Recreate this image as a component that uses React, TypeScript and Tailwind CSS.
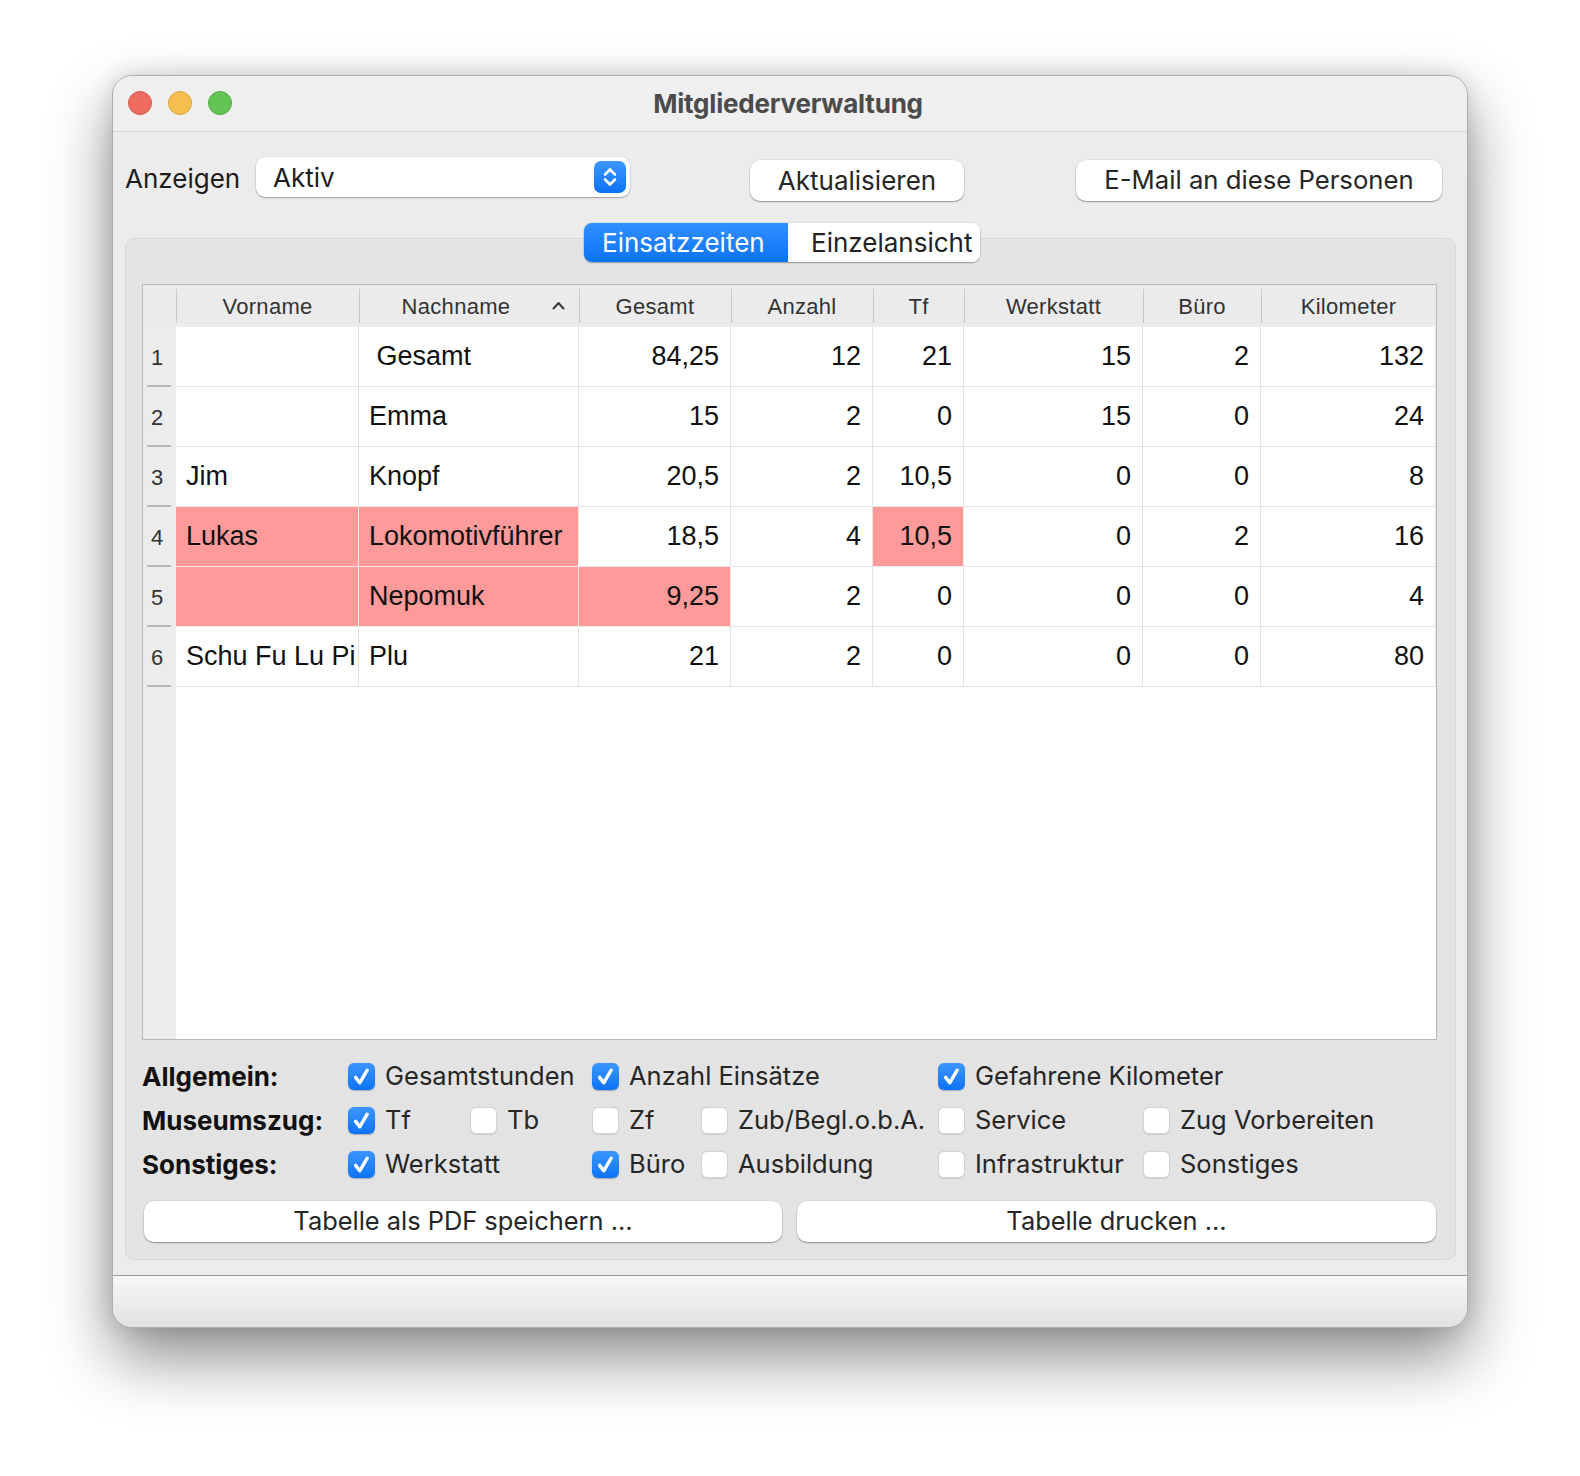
import React from "react";

const UI = "font-['Inter','Noto_Sans',sans-serif]";
const TBL = "font-['Liberation_Sans',Arial,sans-serif]";

type Col = { name: string; right: boolean; sort?: boolean };
const cols: Col[] = [
  { name: "Vorname", right: false },
  { name: "Nachname", right: false, sort: true },
  { name: "Gesamt", right: true },
  { name: "Anzahl", right: true },
  { name: "Tf", right: true },
  { name: "Werkstatt", right: true },
  { name: "Büro", right: true },
  { name: "Kilometer", right: true },
];

const rows: string[][] = [
  ["", " Gesamt", "84,25", "12", "21", "15", "2", "132"],
  ["", "Emma", "15", "2", "0", "15", "0", "24"],
  ["Jim", "Knopf", "20,5", "2", "10,5", "0", "0", "8"],
  ["Lukas", "Lokomotivführer", "18,5", "4", "10,5", "0", "2", "16"],
  ["", "Nepomuk", "9,25", "2", "0", "0", "0", "4"],
  ["Schu Fu Lu Pi", "Plu", "21", "2", "0", "0", "0", "80"],
];

const red: Record<number, number[]> = { 3: [0, 1, 4], 4: [0, 1, 2] };

const GRID =
  "grid grid-cols-[33px_183px_220px_152px_142px_91px_179px_118px_175px]";

function Check({ checked, label }: { checked: boolean; label: string }) {
  return (
    <div className="flex items-center gap-[10px] h-[44px]">
      {checked ? (
        <div className="w-[27px] h-[27px] rounded-[6px] bg-linear-to-b from-[#3a96ff] to-[#0a73f6] flex items-center justify-center shadow-[0_0.5px_1px_rgba(0,0,0,0.25)]">
          <svg width="27" height="27" viewBox="0 0 27 27">
            <path
              d="M7.6 14.4 L11.7 19.8 L19.2 7.2"
              stroke="white"
              strokeWidth="3.4"
              fill="none"
              strokeLinecap="round"
              strokeLinejoin="round"
            />
          </svg>
        </div>
      ) : (
        <div className="w-[27px] h-[27px] rounded-[6px] bg-white border border-[#d3d3d3] shadow-[0_0.5px_1px_rgba(0,0,0,0.1)]" />
      )}
      <span className={`${UI} text-[25.5px] text-[#262626] leading-none whitespace-nowrap`}>
        {label}
      </span>
    </div>
  );
}

function Btn({ children, className }: { children: React.ReactNode; className: string }) {
  return (
    <div
      className={`${className} h-[41px] rounded-[10px] bg-white shadow-[0_1px_1.5px_rgba(0,0,0,0.35),0_0_0_0.5px_rgba(0,0,0,0.08)] flex items-center justify-center text-[#262626] whitespace-nowrap`}
    >
      {children}
    </div>
  );
}

export default function App() {
  return (
    <div className="w-[1580px] h-[1476px] bg-white pt-[75px] pl-[112px]">
      <div className="w-[1356px] h-[1253px] rounded-[20px] border border-[#acacac] bg-[#ececec] overflow-hidden flex flex-col shadow-[0_30px_64px_rgba(0,0,0,0.45),0_0_22px_rgba(0,0,0,0.13)]">
        {/* title bar */}
        <div className="relative h-[56px] shrink-0 bg-[#eeefee] border-b border-[#d5d5d5] flex items-center justify-center">
          <div className="absolute left-[15px] top-[15px] flex gap-[16px]">
            <div className="w-[24px] h-[24px] rounded-full bg-[#ee6b5f] border border-[#d5574c]" />
            <div className="w-[24px] h-[24px] rounded-full bg-[#f5be4f] border border-[#dba43a]" />
            <div className="w-[24px] h-[24px] rounded-full bg-[#62c554] border border-[#50a941]" />
          </div>
          <span className={`${UI} text-[26px] font-bold text-[#4b4b4b] ml-[-4px] tracking-[-0.2px]`}>
            Mitgliederverwaltung
          </span>
        </div>

        {/* top row */}
        <div className={`${UI} flex items-start h-[43px] mt-[25px] pl-[12px] shrink-0`}>
          <div className="w-[131px] h-[42px] flex items-center text-[26px] text-[#1c1c1c]">
            Anzeigen
          </div>
          <div className="w-[374px] h-[40px] rounded-[9px] bg-white shadow-[0_1px_1.5px_rgba(0,0,0,0.3),0_0_0_0.5px_rgba(0,0,0,0.08)] flex items-center pl-[17px] pr-[4px]">
            <span className="flex-1 text-[26px] text-[#1c1c1c]">Aktiv</span>
            <div className="w-[32px] h-[32px] rounded-[7px] bg-linear-to-b from-[#3a96ff] to-[#0a73f6] flex items-center justify-center">
              <svg width="32" height="32" viewBox="0 0 32 32">
                <path d="M11 13.5 L16 8.5 L21 13.5" stroke="white" strokeWidth="2.6" fill="none" strokeLinecap="round" strokeLinejoin="round" />
                <path d="M11 18.5 L16 23.5 L21 18.5" stroke="white" strokeWidth="2.6" fill="none" strokeLinecap="round" strokeLinejoin="round" />
              </svg>
            </div>
          </div>
          <Btn className="ml-[120px] w-[214px] mt-[3px] text-[26px]">Aktualisieren</Btn>
          <Btn className="ml-[112px] w-[366px] mt-[3px] text-[25.7px]">E-Mail an diese Personen</Btn>
        </div>

        {/* group box */}
        <div className="relative ml-[12px] mt-[38px] w-[1331px] h-[1022px] shrink-0 rounded-[9px] border border-[#d8d8d8] bg-[#e3e3e3] pt-[45px] pl-[16px]">
          {/* segmented control */}
          <div className={`${UI} absolute left-[458px] top-[-16px] h-[39px] flex rounded-[8px] overflow-hidden shadow-[0_1px_1.5px_rgba(0,0,0,0.3),0_0_0_0.5px_rgba(0,0,0,0.1)] text-[26px]`}>
            <div className="w-[204px] h-full bg-linear-to-b from-[#2f90ff] to-[#0a73f6] text-white flex items-center pl-[18px]">
              Einsatzzeiten
            </div>
            <div className="w-[192px] h-full bg-white text-[#222] flex items-center pl-[23px]">
              Einzelansicht
            </div>
          </div>

          {/* table */}
          <div className={`${TBL} w-[1295px] h-[756px] border border-[#b9b9b9] bg-white flex flex-col overflow-hidden`}>
            <div className={`${GRID} h-[42px] shrink-0 bg-[#ebebeb] text-[22px] text-[#333]`}>
              <div />
              {cols.map((c) => (
                <div key={c.name} className="relative flex items-center justify-center">
                  <span className="absolute left-0 top-[4px] bottom-[4px] w-px bg-[#c8c8c8]" />
                  <span className={c.sort ? "mr-[26px] tracking-[0.3px]" : "tracking-[0.3px]"}>{c.name}</span>
                  {c.sort && (
                    <svg className="absolute right-[14px] top-[16px]" width="13" height="9" viewBox="0 0 13 9">
                      <path d="M1.5 7.5 L6.5 2 L11.5 7.5" stroke="#3a3a3a" strokeWidth="2" fill="none" strokeLinecap="round" strokeLinejoin="round" />
                    </svg>
                  )}
                </div>
              ))}
            </div>
            {rows.map((r, i) => (
              <div key={i} className={`${GRID} h-[60px] shrink-0`}>
                <div className="relative bg-[#ececec] flex items-center pl-[8px] text-[22px] text-[#333]">
                  {i + 1}
                  <span className="absolute bottom-0 left-[4px] w-[24px] h-[2px] bg-[#b8b8b8]" />
                </div>
                {r.map((v, j) => {
                  const isRed = red[i]?.includes(j);
                  return (
                    <div
                      key={j}
                      className={`${isRed ? "bg-[#fe9a9a]" : "bg-white"} border-r border-b ${isRed ? "border-[#f3eaea]" : "border-[#e3e3e3]"} flex items-center ${cols[j].right ? "justify-end pr-[11px]" : "justify-start pl-[10px]"} text-[27px] text-[#111] whitespace-pre`}
                    >
                      {v}
                    </div>
                  );
                })}
              </div>
            ))}
            <div className="flex-1 grid grid-cols-[33px_1fr]">
              <div className="bg-[#ececec]" />
              <div className="bg-white" />
            </div>
          </div>

          {/* checkboxes */}
          <div className="mt-[14px] grid grid-cols-[206px_122px_122px_109px_237px_205px_1fr] grid-rows-[44px_44px_44px]">
            <div className={`${UI} flex items-center text-[26px] font-bold text-[#111]`}>Allgemein:</div>
            <div className="col-span-2"><Check checked label="Gesamtstunden" /></div>
            <div className="col-span-2"><Check checked label="Anzahl Einsätze" /></div>
            <div className="col-span-2"><Check checked label="Gefahrene Kilometer" /></div>

            <div className={`${UI} flex items-center text-[26px] font-bold text-[#111]`}>Museumszug:</div>
            <Check checked label="Tf" />
            <Check checked={false} label="Tb" />
            <Check checked={false} label="Zf" />
            <Check checked={false} label="Zub/Begl.o.b.A." />
            <Check checked={false} label="Service" />
            <Check checked={false} label="Zug Vorbereiten" />

            <div className={`${UI} flex items-center text-[26px] font-bold text-[#111]`}>Sonstiges:</div>
            <div className="col-span-2"><Check checked label="Werkstatt" /></div>
            <Check checked label="Büro" />
            <Check checked={false} label="Ausbildung" />
            <Check checked={false} label="Infrastruktur" />
            <Check checked={false} label="Sonstiges" />
          </div>

          {/* bottom buttons */}
          <div className={`${UI} mt-[15px] flex gap-[15px] ml-[2px]`}>
            <Btn className="w-[638px] text-[25.4px]">Tabelle als PDF speichern ...</Btn>
            <Btn className="w-[639px] text-[25.4px]">Tabelle drucken ...</Btn>
          </div>
        </div>

        {/* bottom bar */}
        <div className="mt-[15px] flex-1 border-t border-[#9a9a9a] bg-linear-to-b from-[#f7f7f7] to-[#e2e2e2]" />
      </div>
    </div>
  );
}
